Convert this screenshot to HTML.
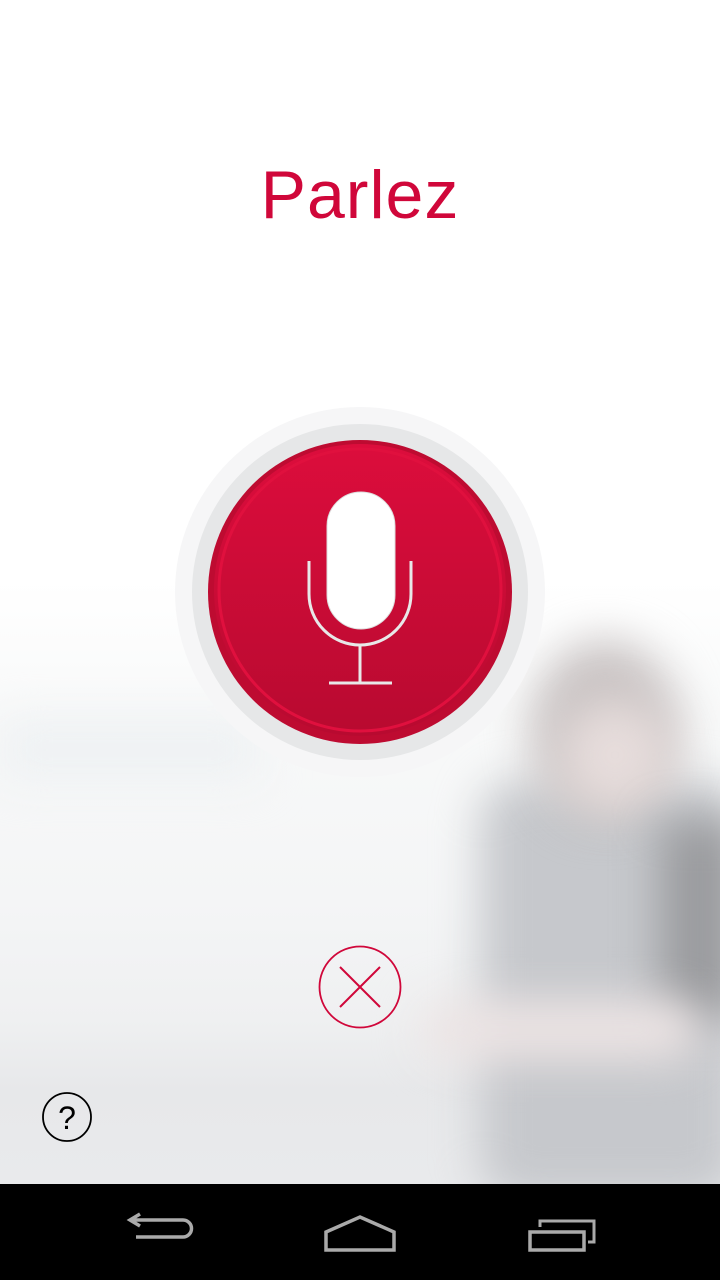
<!DOCTYPE html>
<html><head><meta charset="utf-8"><style>
html,body{margin:0;padding:0;overflow:hidden}
body{width:720px;height:1280px;position:relative;overflow:hidden;background:#fff;font-family:"Liberation Sans",sans-serif}
svg{display:block}
.bg{position:absolute;left:0;top:0;width:720px;height:1184px;overflow:hidden;background:linear-gradient(#fff 0,#fff 580px,#f8f9f9 720px,#f4f5f6 900px,#eff0f1 1020px,#e7e8ea 1090px,#e9eaec 1184px)}
.b{position:absolute;filter:blur(22px)}
.nav{position:absolute;left:0;top:1184px;width:720px;height:96px;background:#000;overflow:hidden}
h1{position:absolute;top:155px;left:0;width:720px;text-align:center;margin:0;font-weight:normal;font-size:68px;line-height:80px;color:#d0073a;letter-spacing:1px}
</style></head><body>
<div class="bg">
 <div class="b" style="left:480px;top:780px;width:260px;height:420px;background:#c6c8cc;border-radius:40px"></div>
 <div class="b" style="left:530px;top:640px;width:150px;height:180px;background:#c9c3c3;border-radius:50%"></div>
 <div class="b" style="left:560px;top:700px;width:110px;height:110px;background:#e6dcdb;border-radius:50%"></div>
 <div class="b" style="left:660px;top:820px;width:80px;height:200px;background:#9a9b9e"></div>
 <div class="b" style="left:420px;top:1000px;width:280px;height:60px;background:#ece4e4;border-radius:30px"></div>
 <div class="b" style="left:0;top:720px;width:260px;height:60px;background:#eef1f3"></div>
</div>
<h1>Parlez</h1>
<svg style="position:absolute;left:0;top:0" width="720" height="1184">
 <defs><linearGradient id="rg" x1="0" y1="0" x2="0" y2="1"><stop offset="0" stop-color="#dc0d3c"/><stop offset="1" stop-color="#b80a30"/></linearGradient></defs>
 <circle cx="360" cy="592" r="185" fill="#f6f6f7"/>
 <circle cx="360" cy="592" r="168" fill="#e6e7e8"/>
 <circle cx="360" cy="592" r="152" fill="#be0b31"/>
 <circle cx="360" cy="590" r="146" fill="url(#rg)"/>
 <circle cx="360" cy="590" r="141" fill="none" stroke="#e0103e" stroke-width="3"/>
 <rect x="327" y="492" width="68" height="137" rx="34" fill="#fff" stroke="#ddd" stroke-width="1"/>
 <path d="M309 561 V594 A51 51 0 0 0 411 594 V561" fill="none" stroke="#e8e8e8" stroke-width="3"/>
 <path d="M360 646 V683 M329 683 H392" fill="none" stroke="#e8e8e8" stroke-width="3"/>
 <circle cx="360" cy="987" r="40.5" fill="none" stroke="#d0073a" stroke-width="1.8"/>
 <path d="M340 967 L380 1007 M380 967 L340 1007" stroke="#d0073a" stroke-width="2"/>
 <circle cx="67" cy="1117" r="24" fill="none" stroke="#000" stroke-width="1.8"/>
 <text x="67" y="1129" text-anchor="middle" font-family="Liberation Sans" font-size="32" fill="#000">?</text>
</svg>
<div class="nav">
<svg width="720" height="96">
 <path d="M140 30 L130 36 L140 42 M131 36 H183 A8 8 0 0 1 183 53 H136" fill="none" stroke="#aaa" stroke-width="3.5"/>
 <path d="M326 66 V48 L360 33 L394 48 V66 Z" fill="none" stroke="#aaa" stroke-width="3.5"/>
 <path d="M530 48 H584 V66 H530 Z" fill="none" stroke="#aaa" stroke-width="3.5"/>
 <path d="M540 43 V37 H594 V58 H588" fill="none" stroke="#aaa" stroke-width="3"/>
</svg>
</div>
</body></html>
